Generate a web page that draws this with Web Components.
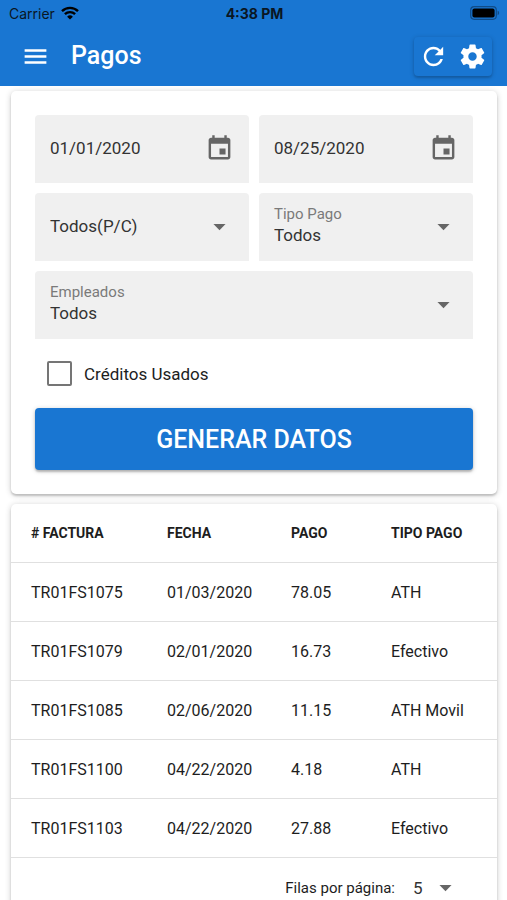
<!DOCTYPE html>
<html lang="es">
<head>
  <meta charset="utf-8">
  <meta name="viewport" content="width=device-width, initial-scale=1">
  <title>Pagos</title>
  <style>
    :root {
      --primary: #1976d2;
      --field: #f0f0f0;
      --icon: #666;
      --line: #e0e0e0;
    }
    body {
      margin: 0;
      background: #fff;
      color: #1d1d1d;
      font-family: Roboto, "Liberation Sans", sans-serif;
      font-size: 16px;
    }
  </style>
</head>
<body>
  <payments-app></payments-app>

  <script>
    const ICONS = {
      menu: 'M3 18h18v-2H3v2zm0-5h18v-2H3v2zm0-7v2h18V6H3z',
      refresh: 'M17.65 6.35C16.2 4.9 14.21 4 12 4c-4.42 0-7.99 3.58-7.99 8s3.57 8 7.99 8c3.73 0 6.84-2.55 7.73-6h-2.08c-.82 2.33-3.04 4-5.65 4-3.31 0-6-2.69-6-6s2.69-6 6-6c1.66 0 3.14.69 4.22 1.78L13 11h7V4l-2.35 2.35z',
      settings: 'M19.43 12.98c.04-.32.07-.64.07-.98s-.03-.66-.07-.98l2.11-1.65c.19-.15.24-.42.12-.64l-2-3.46c-.12-.22-.39-.3-.61-.22l-2.49 1c-.52-.4-1.08-.73-1.69-.98l-.38-2.65C14.46 2.18 14.25 2 14 2h-4c-.25 0-.46.18-.49.42l-.38 2.65c-.61.25-1.17.59-1.69.98l-2.49-1c-.23-.09-.49 0-.61.22l-2 3.46c-.13.22-.07.49.12.64l2.11 1.65c-.04.32-.07.65-.07.98s.03.66.07.98l-2.11 1.65c-.19.15-.24.42-.12.64l2 3.46c.12.22.39.3.61.22l2.49-1c.52.4 1.08.73 1.69.98l.38 2.65c.03.24.24.42.49.42h4c.25 0 .46-.18.49-.42l.38-2.65c.61-.25 1.17-.59 1.69-.98l2.49 1c.23.09.49 0 .61-.22l2-3.46c.12-.22.07-.49-.12-.64l-2.11-1.65zM12 15.5c-1.93 0-3.5-1.57-3.5-3.5s1.57-3.5 3.5-3.5 3.5 1.57 3.5 3.5-1.57 3.5-3.5 3.5z',
      event: 'M17 12h-5v5h5v-5zM16 1v2H8V1H6v2H5c-1.11 0-1.99.9-1.99 2L3 19c0 1.1.89 2 2 2h14c1.1 0 2-.9 2-2V5c0-1.1-.9-2-2-2h-1V1h-2zm3 18H5V8h14v11z',
      dropdown: 'M7 10l5 5 5-5z'
    };

    const PAYMENTS = [
      ['TR01FS1075', '01/03/2020', '78.05', 'ATH'],
      ['TR01FS1079', '02/01/2020', '16.73', 'Efectivo'],
      ['TR01FS1085', '02/06/2020', '11.15', 'ATH Movil'],
      ['TR01FS1100', '04/22/2020', '4.18', 'ATH'],
      ['TR01FS1103', '04/22/2020', '27.88', 'Efectivo']
    ];

    // Shared by every element: open root, html set once
    class BaseElement extends HTMLElement {
      constructor() {
        super();
        this.attachShadow({ mode: 'open' });
      }

      connectedCallback() {
        this.shadowRoot.innerHTML = this.render();
      }

      attr(name) {
        return this.getAttribute(name) || '';
      }
    }

    class MdIcon extends BaseElement {
      render() {
        return `
          <style>
            :host { display: block; flex: none; width: 29px; height: 29px; }
            svg { display: block; width: 100%; height: 100%; fill: currentColor; }
          </style>
          <svg viewBox="0 0 24 24" aria-hidden="true"><path d="${ICONS[this.attr('name')]}"/></svg>
        `;
      }
    }

    class StatusBar extends BaseElement {
      render() {
        return `
          <style>
            :host {
              display: grid;
              grid-template-columns: 1fr auto 1fr;
              align-items: center;
              height: 28px;
              padding: 0 7px 2px 9px;
              box-sizing: border-box;
              color: #0a1624;
              font: 14px Inter, Roboto, sans-serif;
            }
            .carrier { display: flex; align-items: center; gap: 6px; }
            .time { font-weight: 700; }
            .battery { justify-self: end; }
            svg { display: block; }
          </style>
          <span class="carrier">Carrier
            <svg width="18" height="14" viewBox="0 0 18 14" fill="none" stroke="#000" stroke-width="2.4" aria-hidden="true">
              <path d="M1 5.2a11.4 11.4 0 0 1 16 0M3.9 8.2a7.3 7.3 0 0 1 10.2 0"/>
              <path d="M9 13.6l-2.9-2.9a4.2 4.2 0 0 1 5.8 0z" fill="#000" stroke="none"/>
            </svg>
          </span>
          <span class="time">4:38 PM</span>
          <svg class="battery" width="30" height="14" viewBox="0 0 30 14" aria-hidden="true">
            <rect x=".7" y=".7" width="25.6" height="12.6" rx="3.5" fill="none" stroke="#104c88" stroke-width="1.2"/>
            <rect x="2.4" y="2.4" width="22.2" height="9.2" rx="2" fill="#000"/>
            <path d="M27.6 4.8c2 .6 2 3.8 0 4.4z" fill="#104c88"/>
          </svg>
        `;
      }
    }

    class AppBar extends BaseElement {
      render() {
        return `
          <style>
            :host { display: block; flex: none; background: var(--primary); color: #fff; }
            .toolbar { display: flex; align-items: center; height: 58px; padding: 0 15px 2px 21px; box-sizing: border-box; }
            h1 { flex: 1; margin: 0 0 0 21px; font-size: 25px; font-weight: 500; line-height: 32px; }
            button { display: block; padding: 0; border: 0; background: none; color: inherit; cursor: pointer; }
            .actions {
              display: flex;
              gap: 10px;
              padding: 5px;
              border-radius: 4px;
              box-shadow: 0 1px 5px rgba(0, 0, 0, .2), 0 2px 2px rgba(0, 0, 0, .12);
            }
          </style>
          <status-bar></status-bar>
          <div class="toolbar">
            <button type="button" aria-label="Menú"><md-icon name="menu"></md-icon></button>
            <h1><slot></slot></h1>
            <div class="actions">
              <button type="button" aria-label="Refrescar"><md-icon name="refresh"></md-icon></button>
              <button type="button" aria-label="Ajustes"><md-icon name="settings"></md-icon></button>
            </div>
          </div>
        `;
      }
    }

    class CardPanel extends BaseElement {
      render() {
        return `
          <style>
            :host {
              display: block;
              border-radius: 5px;
              background: #fff;
              box-shadow: 0 1px 6px rgba(0, 0, 0, .2), 0 2px 2px rgba(0, 0, 0, .16);
            }
          </style>
          <slot></slot>
        `;
      }
    }

    const FIELD_STYLE = `
      :host { display: block; min-width: 0; }
      .field {
        display: flex;
        align-items: center;
        height: 68px;
        padding: 0 15px 2px;
        border-radius: 4px 4px 0 0;
        background: var(--field);
        box-sizing: border-box;
      }
      .text { flex: 1; min-width: 0; }
      label { display: block; color: #7a7a7a; font-size: 15px; line-height: 18px; }
      input, select {
        display: block;
        width: 100%;
        height: 24px;
        padding: 0;
        border: 0;
        outline: 0;
        appearance: none;
        background: none;
        color: #333;
        font: 17px Roboto, sans-serif;
      }
      button { padding: 0; border: 0; background: none; cursor: pointer; }
      md-icon { color: var(--icon); }
    `;

    class DateField extends BaseElement {
      render() {
        return `
          <style>${FIELD_STYLE}</style>
          <div class="field">
            <div class="text"><input type="text" value="${this.attr('value')}" aria-label="${this.attr('name')}"></div>
            <button type="button" aria-label="Abrir calendario"><md-icon name="event"></md-icon></button>
          </div>
        `;
      }
    }

    class SelectField extends BaseElement {
      render() {
        const label = this.attr('label');
        return `
          <style>${FIELD_STYLE}</style>
          <div class="field">
            <div class="text">
              ${label ? `<label for="select">${label}</label>` : ''}
              <select id="select" aria-label="${label || this.attr('name')}"><option>${this.attr('value')}</option></select>
            </div>
            <md-icon name="dropdown"></md-icon>
          </div>
        `;
      }
    }

    class CheckField extends BaseElement {
      render() {
        return `
          <style>
            :host { display: block; }
            label { display: inline-flex; align-items: center; gap: 12px; height: 69px; padding-left: 12px; font-size: 17px; }
            input {
              appearance: none;
              width: 25px;
              height: 25px;
              margin: 0;
              border: 2px solid #757575;
              border-radius: 2px;
            }
            input:checked { border-color: var(--primary); background: var(--primary); }
          </style>
          <label><input type="checkbox"><slot></slot></label>
        `;
      }
    }

    class RaisedButton extends BaseElement {
      render() {
        return `
          <style>
            :host { display: block; }
            button {
              display: block;
              width: 100%;
              height: 62px;
              border: 0;
              border-radius: 4px;
              background: var(--primary);
              color: #fff;
              font: 500 25px Roboto, sans-serif;
              text-transform: uppercase;
              box-shadow: 0 1px 5px rgba(0, 0, 0, .2), 0 2px 2px rgba(0, 0, 0, .2);
              cursor: pointer;
            }
          </style>
          <button type="button"><slot></slot></button>
        `;
      }
    }

    class PaymentsTable extends BaseElement {
      render() {
        const rows = PAYMENTS.map(
          (row) => `<tr>${row.map((cell) => `<td>${cell}</td>`).join('')}</tr>`
        ).join('');
        return `
          <style>
            :host { display: block; }
            table { width: 100%; border-collapse: separate; border-spacing: 0; table-layout: fixed; }
            th, td {
              height: 59px;
              padding: 0 0 0 20px;
              border-bottom: 1px solid var(--line);
              box-sizing: border-box;
              text-align: left;
              white-space: nowrap;
            }
            th { font-size: 14px; font-weight: 700; }
            /* widths act as proportions, the table always fills its card */
            th:nth-child(1) { width: 136px; }
            th:nth-child(2) { width: 124px; }
            th:nth-child(3) { width: 100px; }
            th:nth-child(4) { width: 126px; }
            .bottom { display: flex; align-items: center; justify-content: flex-end; height: 59px; padding-right: 37px; }
            label { margin-right: 18px; font-size: 15px; }
            select {
              width: 18px;
              padding: 0;
              border: 0;
              appearance: none;
              background: none;
              color: #333;
              font: 17px Roboto, sans-serif;
            }
            md-icon { color: var(--icon); }
          </style>
          <table>
            <thead>
              <tr><th># FACTURA</th><th>FECHA</th><th>PAGO</th><th>TIPO PAGO</th></tr>
            </thead>
            <tbody>${rows}</tbody>
          </table>
          <div class="bottom">
            <label for="rows">Filas por página:</label>
            <select id="rows"><option>5</option></select>
            <md-icon name="dropdown"></md-icon>
          </div>
        `;
      }
    }

    class PaymentsApp extends BaseElement {
      render() {
        return `
          <style>
            :host { display: flex; flex-direction: column; height: 100vh; }
            main {
              flex: 1;
              min-height: 0;
              overflow-y: auto;
              scrollbar-width: none;
              padding: 5px 10px 10px 11px;
            }
            .filters { display: grid; grid-template-columns: 1fr 1fr; gap: 10px; }
            form { padding: 24px; }
            .wide { grid-column: 1 / -1; }
            card-panel + card-panel { margin-top: 10px; }
          </style>
          <app-bar>Pagos</app-bar>
          <main>
            <card-panel>
              <form>
                <div class="filters">
                  <date-field name="Desde" value="01/01/2020"></date-field>
                  <date-field name="Hasta" value="08/25/2020"></date-field>
                  <select-field name="Tipo" value="Todos(P/C)"></select-field>
                  <select-field label="Tipo Pago" value="Todos"></select-field>
                  <select-field class="wide" label="Empleados" value="Todos"></select-field>
                </div>
                <check-field>Créditos Usados</check-field>
                <raised-button>Generar datos</raised-button>
              </form>
            </card-panel>
            <card-panel>
              <payments-table></payments-table>
            </card-panel>
          </main>
        `;
      }
    }

    customElements.define('md-icon', MdIcon);
    customElements.define('status-bar', StatusBar);
    customElements.define('app-bar', AppBar);
    customElements.define('card-panel', CardPanel);
    customElements.define('date-field', DateField);
    customElements.define('select-field', SelectField);
    customElements.define('check-field', CheckField);
    customElements.define('raised-button', RaisedButton);
    customElements.define('payments-table', PaymentsTable);
    customElements.define('payments-app', PaymentsApp);
  </script>
</body>
</html>
